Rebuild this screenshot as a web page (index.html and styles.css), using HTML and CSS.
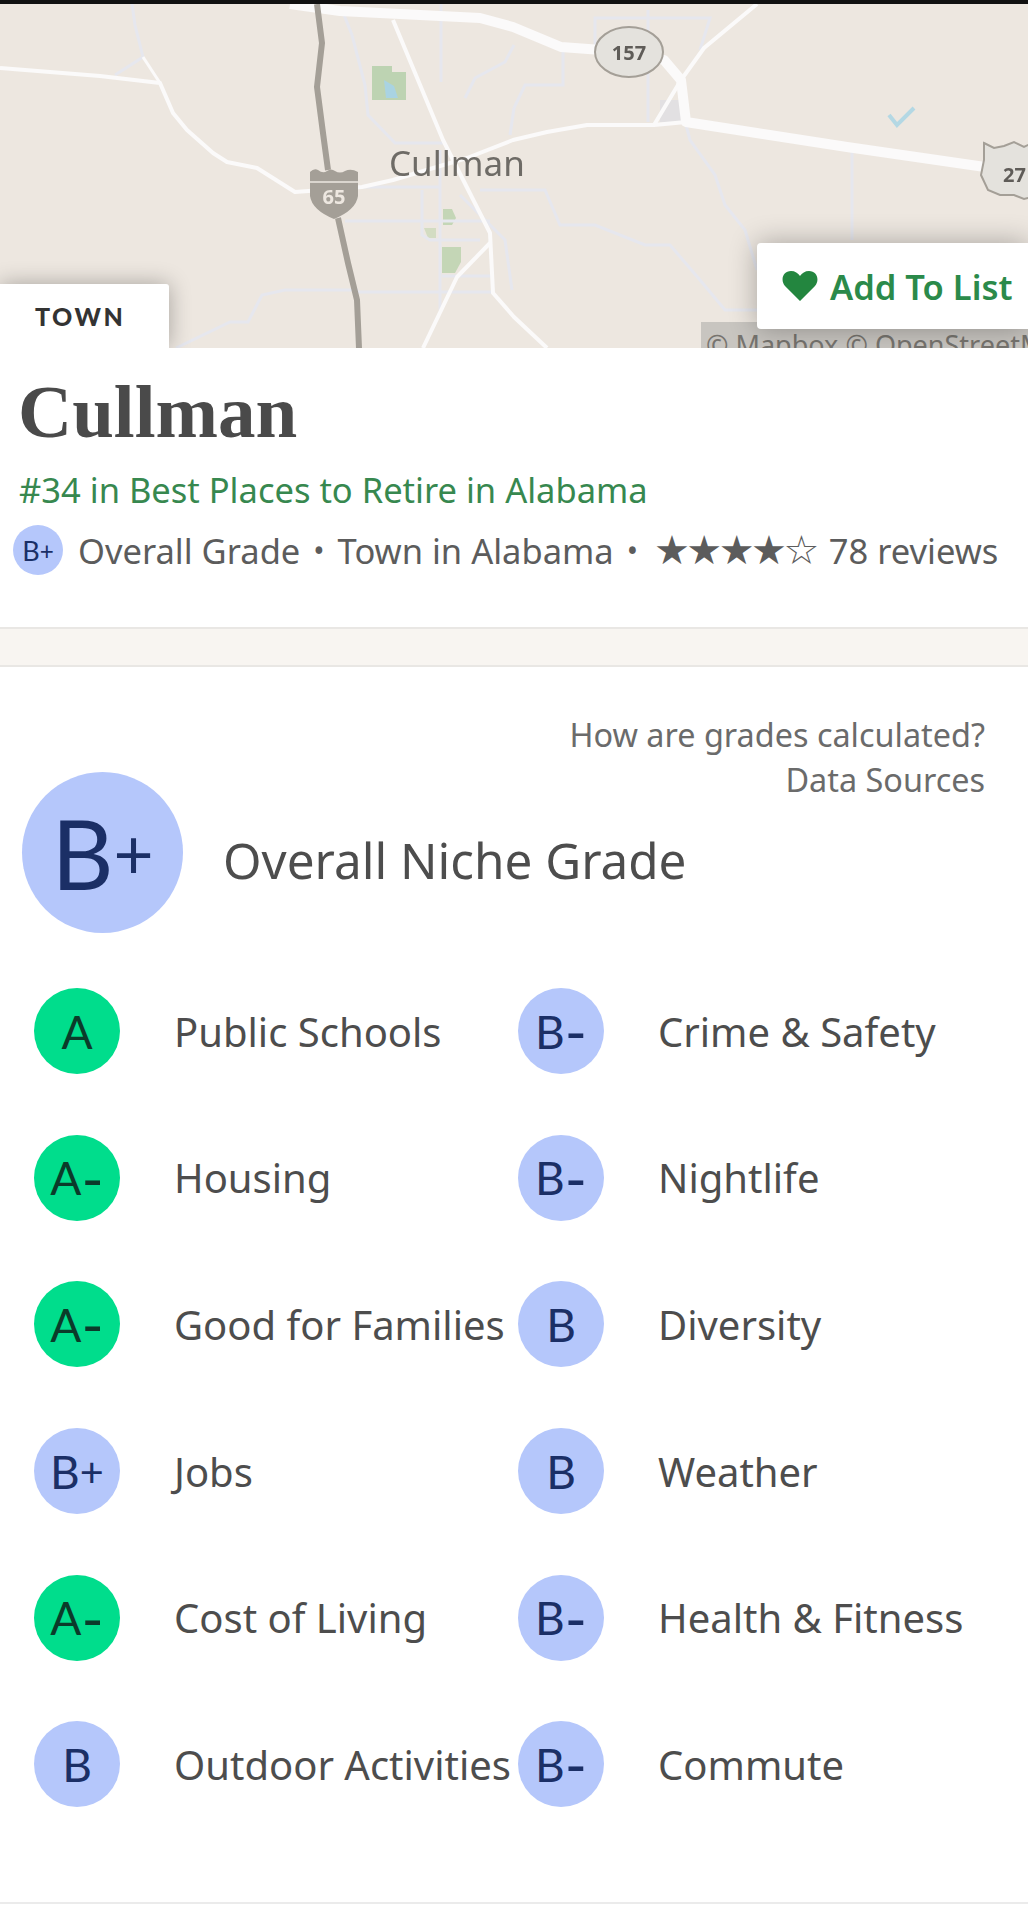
FILE: index.html
```html
<!DOCTYPE html>
<html lang="en">
<head>
    <meta charset="UTF-8">
    <meta name="viewport" content="width=device-width, initial-scale=1.0">
    <title>Cullman</title>
    <link rel="stylesheet" href="styles.css">
</head>
<body>
    <div class="topbar"></div>

    <div class="map">
        <svg class="map-art" viewBox="0 4 1028 344" width="1028" height="344">
            <!-- parks and water -->
            <path d="M372 66H392V72H406V100H372Z" fill="#bdd3b2"/>
            <path d="M384 80L394 86L398 98H386Z" fill="#a9d3e2"/>
            <path d="M443 209H452L456 218L452 225H443Z" fill="#c4d6b6"/>
            <path d="M424 228H436V238H428Z" fill="#d3dcc2"/>
            <path d="M442 247H461V262L455 273H442Z" fill="#c4d6b6"/>
            <path d="M889 115L897 125L914 108" fill="none" stroke="#b4d8e4" stroke-width="4"/>
            <path d="M660 100H680L686 122H660Z" fill="#e2e0e2"/>

            <!-- small streets -->
            <g fill="none" stroke="#e6e7ee" stroke-width="3">
                <path d="M132 4L135 25L143 57L115 75"/>
                <path d="M342 10L352 35L365 85L368 115L395 143H443"/>
                <path d="M441 4V82"/>
                <path d="M514 45L505 62L475 78L465 98"/>
                <path d="M514 108L510 135"/>
                <path d="M595 52V18H710L700 50"/>
                <path d="M648 10V122"/>
                <path d="M563 47V85H525L514 108"/>
                <path d="M362 187H440"/>
                <path d="M345 221H490"/>
                <path d="M422 190V235L430 240H480"/>
                <path d="M440 150V310"/>
                <path d="M460 195L505 240L512 290"/>
                <path d="M442 276H492"/>
                <path d="M358 292H493"/>
                <path d="M176 348L230 322H248L262 295L285 290L358 290"/>
                <path d="M480 190H545L560 225H595L645 245H670L700 280L725 310H757"/>
                <path d="M686 125L690 140L715 175L725 205L745 230L757 270"/>
                <path d="M852 150V240"/>
            </g>

            <!-- main roads -->
            <g fill="none" stroke="#fbfafa" stroke-linejoin="round">
                <path stroke-width="4" d="M0 68L100 76L160 83L173 113L187 130L213 153L227 162L257 168L295 192L362 187L393 180L467 158L513 140L547 132L587 125L654 125L686 122"/>
                <path stroke-width="3" d="M160 83L143 57"/>
                <path stroke-width="4" d="M393 20L443 140L490 233L493 293L514 317L547 348"/>
                <path stroke-width="4" d="M423 348L457 277L490 243"/>
                <path stroke-width="4" d="M654 125L681 80L704 48L757 4"/>
                <path stroke-width="10" d="M290 4L340 11L480 18L513 27L561 47L629 52L664 60L681 80L686 122L847 147L985 167"/>
            </g>
            <path d="M317 4L322 43L317 87L323 133L328 170M338 218L348 263L357 300L359 348" fill="none" stroke="#a49f97" stroke-width="6"/>

            <!-- road shields -->
            <path d="M310 172Q314 168 318 170Q323 174 327 171Q331 168 335 171Q340 174 345 171Q351 168 358 172V196Q356 210 334 219Q312 210 310 196Z" fill="#a49f97"/>
            <path d="M310 182H358" stroke="#ede7e0" stroke-width="1.5"/>
            <text class="shield-num shield-light" x="334" y="204" text-anchor="middle">65</text>

            <ellipse cx="629" cy="52" rx="34" ry="25" fill="#e4e2dd" stroke="#a49f97" stroke-width="2"/>
            <text class="shield-num" x="629" y="60" text-anchor="middle">157</text>

            <path d="M984 143L994 148L1004 146L1014 142L1024 147L1032 143V197L1024 199L1014 195H1000L988 190L981 175L984 160Z" fill="#e4e2dd" stroke="#a49f97" stroke-width="2"/>
            <text class="shield-num" x="1003" y="182">27</text>

            <text class="map-city" x="389" y="176">Cullman</text>
        </svg>

        <div class="attribution">© Mapbox © OpenStreetMap</div>
        <div class="town-tag">TOWN</div>
        <div class="add-list">
            <svg class="heart" viewBox="0 0 36 30" width="36" height="30">
                <path d="M18 30L3 15C-2 9 1 0 9 0C13 0 16 2 18 5C20 2 23 0 27 0C35 0 38 9 33 15Z"/>
            </svg>
            <span>Add To List</span>
        </div>
    </div>

    <div class="summary">
        <h1>Cullman</h1>
        <div class="rank">#34 in Best Places to Retire in Alabama</div>
        <div class="meta">
            <span class="grade grade-tiny">B<span class="plus">+</span></span>
            <span>Overall Grade</span>
            <span class="dot">•</span>
            <span>Town in Alabama</span>
            <span class="dot">•</span>
            <span class="stars">★★★★☆</span>
            <span>78 reviews</span>
        </div>
    </div>

    <div class="spacer"></div>

    <div class="grades">
        <div class="links">
            <div>How are grades calculated?</div>
            <div>Data Sources</div>
        </div>
        <div class="overall">
            <span class="grade grade-big">B<span class="plus">+</span></span>
            <span class="overall-label">Overall Niche Grade</span>
        </div>
        <div class="grade-list">
            <div class="row"><span class="grade grade-a">A</span><span>Public Schools</span></div>
            <div class="row"><span class="grade">B<span class="minus">-</span></span><span>Crime &amp; Safety</span></div>
            <div class="row"><span class="grade grade-a">A<span class="minus">-</span></span><span>Housing</span></div>
            <div class="row"><span class="grade">B<span class="minus">-</span></span><span>Nightlife</span></div>
            <div class="row"><span class="grade grade-a">A<span class="minus">-</span></span><span>Good for Families</span></div>
            <div class="row"><span class="grade">B</span><span>Diversity</span></div>
            <div class="row"><span class="grade">B<span class="plus">+</span></span><span>Jobs</span></div>
            <div class="row"><span class="grade">B</span><span>Weather</span></div>
            <div class="row"><span class="grade grade-a">A<span class="minus">-</span></span><span>Cost of Living</span></div>
            <div class="row"><span class="grade">B<span class="minus">-</span></span><span>Health &amp; Fitness</span></div>
            <div class="row"><span class="grade">B</span><span>Outdoor Activities</span></div>
            <div class="row"><span class="grade">B<span class="minus">-</span></span><span>Commute</span></div>
        </div>
    </div>
</body>
</html>
```
FILE: styles.css
```css
body {
    margin: 0;
    height: 1912px;
    overflow: hidden;
    background-color: #fff;
    font-family: "Noto Sans", Arial, sans-serif;
    color: #4d4d4d;
}
.topbar {
    height: 4px;
    background-color: #111;
}
.map {
    position: relative;
    height: 344px;
    overflow: hidden;
    background-color: #ede7e0;
}
.map-art {
    display: block;
    filter: blur(0.7px);
}
.map-city {
    font-family: "Noto Sans", sans-serif;
    font-size: 35px;
    fill: #6e6b66;
}
.shield-num {
    font-family: "Noto Sans", sans-serif;
    font-size: 20px;
    font-weight: 700;
    fill: #5f5c58;
}
.shield-light {
    fill: #ede7e0;
}
.attribution {
    position: absolute;
    right: 0;
    bottom: 0;
    width: 322px;
    height: 26px;
    padding-left: 5px;
    overflow: hidden;
    white-space: nowrap;
    background-color: #c8c5c0;
    font-size: 27px;
    line-height: 46px;
    color: #77746f;
}
.town-tag {
    position: absolute;
    left: 0;
    bottom: 0;
    width: 134px;
    height: 64px;
    padding-left: 35px;
    background-color: #fff;
    border-top-right-radius: 3px;
    box-shadow: 0 0 22px rgba(0, 0, 0, 0.3);
    font-family: Lato, sans-serif;
    font-size: 25px;
    font-weight: 900;
    letter-spacing: 2.5px;
    line-height: 64px;
    color: #333;
}
.add-list {
    position: absolute;
    right: 0;
    top: 239px;
    width: 271px;
    height: 86px;
    box-sizing: border-box;
    padding-left: 25px;
    display: flex;
    align-items: center;
    gap: 12px;
    background-color: #fff;
    border-radius: 4px 0 0 4px;
    box-shadow: 0 0 28px rgba(0, 0, 0, 0.3);
    font-size: 34.5px;
    font-weight: 600;
    color: #2b8a4a;
}
.heart {
    fill: #23863f;
}
.summary {
    height: 279px;
    box-sizing: border-box;
    padding-top: 25px;
}
h1 {
    margin: 0 0 0 18px;
    font-family: "Liberation Serif", serif;
    font-size: 75px;
    font-weight: 700;
    line-height: 78px;
    color: #4a4a4a;
}
.rank {
    margin: 17px 0 0 19px;
    font-size: 34.5px;
    line-height: 44px;
    color: #37884f;
}
.meta {
    margin: 13px 0 0 13px;
    display: flex;
    align-items: center;
    gap: 13px;
    font-size: 34.5px;
    white-space: nowrap;
    color: #5c5c5c;
}
.dot {
    font-size: 30px;
}
.stars {
    margin-left: 3px;
    font-family: "DejaVu Sans", sans-serif;
    font-size: 40px;
    letter-spacing: -3.5px;
    line-height: 44px;
}
.grade {
    flex-shrink: 0;
    width: 86px;
    height: 86px;
    display: flex;
    align-items: center;
    justify-content: center;
    border-radius: 50%;
    background-color: #b5c7fb;
    font-family: Lato, sans-serif;
    font-size: 46px;
    color: #1b2f66;
}
.grade-a {
    background-color: #00dd8c;
    color: #0b3b2a;
}
.grade-tiny {
    width: 50px;
    height: 50px;
    margin-right: 2px;
    font-size: 27px;
}
.grade-big {
    width: 161px;
    height: 161px;
    font-size: 96px;
}
.plus {
    font-size: 0.9em;
}
.grade-big .plus {
    font-size: 0.72em;
}
.minus {
    font-size: 1.3em;
}
.spacer {
    height: 40px;
    box-sizing: border-box;
    background-color: #f8f5f1;
    border-top: 2px solid #e9e7e4;
    border-bottom: 2px solid #e9e7e4;
}
.grades {
    padding-top: 45px;
    padding-bottom: 64px;
    border-bottom: 2px solid #ebebeb;
}
.links {
    padding-right: 43px;
    text-align: right;
    font-size: 32.4px;
    line-height: 45px;
    color: #6b6b6b;
}
.overall {
    margin: -30px 0 0 22px;
    display: flex;
    align-items: center;
    gap: 40px;
}
.overall-label {
    padding-top: 14px;
    font-size: 49.4px;
    color: #4d4d4d;
}
.grade-list {
    margin: 25px 0 0 34px;
    display: grid;
    grid-template-columns: 484px 1fr;
    grid-auto-rows: 146.6px;
}
.row {
    display: flex;
    align-items: center;
    gap: 54px;
    font-size: 40px;
    white-space: nowrap;
}
```
